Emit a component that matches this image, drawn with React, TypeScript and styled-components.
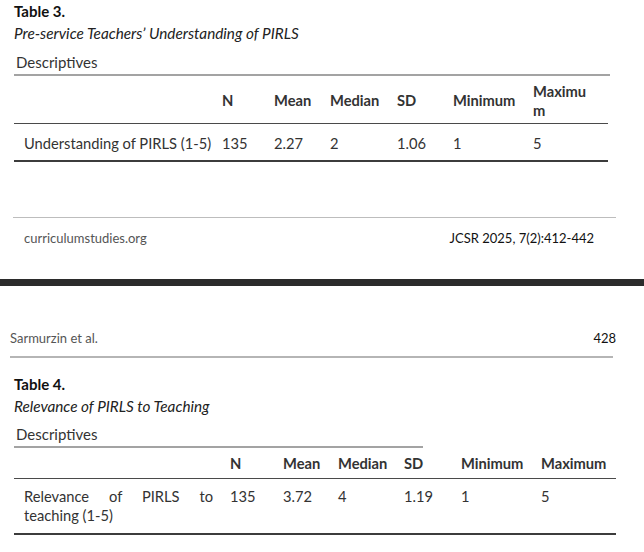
import React from "react";
import styled, { createGlobalStyle } from "styled-components";

const GlobalStyle = createGlobalStyle`
  html, body {
    margin: 0;
    padding: 0;
    background: #ffffff;
  }
  body {
    font-family: Lato, "Open Sans", sans-serif;
    color: #222;
    width: 644px;
    height: 552px;
    overflow: hidden;
  }
`;

const Page = styled.section`
  display: flex;
  flex-direction: column;
  background: #ffffff;
`;

const TableBlock = styled.div`
  display: flex;
  flex-direction: column;
  padding-left: 14px;
`;

const TableNumber = styled.div`
  font-weight: bold;
  font-size: 15px;
  line-height: 20px;
  color: #111;
`;

const TableCaption = styled.div`
  font-style: italic;
  font-size: 15.3px;
  line-height: 20px;
  margin-top: 2px;
  color: #222;
`;

const SectionLabel = styled.div<{ $width: number; $gapTop: number }>`
  width: ${(p) => p.$width}px;
  margin-top: ${(p) => p.$gapTop}px;
  padding: 0 0 2px 2px;
  box-sizing: border-box;
  font-size: 15px;
  line-height: 20px;
  color: #333;
  border-bottom: 2px solid #a3a3a3;
`;

const DataTable = styled.table<{ $width: number }>`
  width: ${(p) => p.$width}px;
  border-collapse: collapse;
  table-layout: fixed;
  font-size: 14.7px;
  color: #333;
`;

const HeadRow = styled.tr<{ $height: number }>`
  height: ${(p) => p.$height}px;
  border-bottom: 1px solid #4a4a4a;
`;

const BodyRow = styled.tr<{ $height: number }>`
  height: ${(p) => p.$height}px;
  border-bottom: 2px solid #3c3c3c;
`;

const HeadCell = styled.th<{ $width: number; $top: number }>`
  width: ${(p) => p.$width}px;
  box-sizing: border-box;
  padding: ${(p) => p.$top}px 0 0 6px;
  text-align: left;
  font-weight: bold;
  line-height: 19px;
  color: #333;
`;

const Cell = styled.td<{ $pad: number }>`
  box-sizing: border-box;
  padding: ${(p) => p.$pad}px 0 0 6px;
  text-align: left;
  vertical-align: top;
  line-height: 19px;
`;

const LabelCell = styled.td<{ $pad: number; $single?: boolean }>`
  box-sizing: border-box;
  padding: ${(p) => p.$pad}px 11px 0 10px;
  text-align: justify;
  white-space: ${(p) => (p.$single ? "nowrap" : "normal")};
  overflow: visible;
  vertical-align: top;
  line-height: 19px;
`;

const Footer = styled.div`
  display: flex;
  flex-direction: column;
  margin: 0 28px 0 13px;
  border-top: 1px solid #bdbdbd;
`;

const FooterRow = styled.div`
  display: flex;
  justify-content: space-between;
  align-items: center;
  padding: 11px 22px 0 11px;
  font-size: 13px;
  line-height: 18px;
`;

const SiteName = styled.span`
  color: #555;
`;

const Citation = styled.span`
  color: #111;
`;

const PageGap = styled.div`
  height: 7px;
  background: #2b2b2b;
`;

const RunningHead = styled.div`
  display: flex;
  justify-content: space-between;
  align-items: center;
  margin: 0 31px 0 10px;
  padding: 0 0 9px 0;
  font-size: 13px;
  line-height: 18px;
  border-bottom: 2px solid #b5b5b5;
`;

const Authors = styled.span`
  color: #555;
`;

const PageNumber = styled.span`
  color: #111;
  margin-right: -3px;
`;

type Column = { key: string; label: React.ReactNode; width: number };

const cols3: Column[] = [
  { key: "label", label: "", width: 202 },
  { key: "n", label: "N", width: 52 },
  { key: "mean", label: "Mean", width: 56 },
  { key: "median", label: "Median", width: 67 },
  { key: "sd", label: "SD", width: 56 },
  { key: "min", label: "Minimum", width: 80 },
  {
    key: "max",
    label: (
      <>
        Maximu
        <br />m
      </>
    ),
    width: 81,
  },
];

const cols4: Column[] = [
  { key: "label", label: "", width: 210 },
  { key: "n", label: "N", width: 53 },
  { key: "mean", label: "Mean", width: 55 },
  { key: "median", label: "Median", width: 66 },
  { key: "sd", label: "SD", width: 57 },
  { key: "min", label: "Minimum", width: 80 },
  { key: "max", label: "Maximum", width: 81 },
];

const values3 = ["135", "2.27", "2", "1.06", "1", "5"];
const values4 = ["135", "3.72", "4", "1.19", "1", "5"];

const App: React.FC = () => {
  return (
    <>
      <GlobalStyle />
      <Page>
        <TableBlock style={{ paddingTop: 1 }}>
          <TableNumber>Table 3.</TableNumber>
          <TableCaption>Pre-service Teachers’ Understanding of PIRLS</TableCaption>
          <SectionLabel $width={596} $gapTop={9}>
            Descriptives
          </SectionLabel>
          <DataTable $width={594}>
            <thead>
              <HeadRow $height={47}>
                {cols3.map((c) => (
                  <HeadCell key={c.key} $width={c.width} $top={3}>
                    {c.label}
                  </HeadCell>
                ))}
              </HeadRow>
            </thead>
            <tbody>
              <BodyRow $height={38}>
                <LabelCell $pad={10} $single>
                  Understanding of PIRLS (1-5)
                </LabelCell>
                {values3.map((v, i) => (
                  <Cell key={i} $pad={10}>
                    {v}
                  </Cell>
                ))}
              </BodyRow>
            </tbody>
          </DataTable>
        </TableBlock>
        <Footer style={{ marginTop: 55 }}>
          <FooterRow>
            <SiteName>curriculumstudies.org</SiteName>
            <Citation>JCSR 2025, 7(2):412-442</Citation>
          </FooterRow>
        </Footer>
      </Page>
      <PageGap style={{ marginTop: 32 }} />
      <Page>
        <RunningHead style={{ marginTop: 43 }}>
          <Authors>Sarmurzin et al.</Authors>
          <PageNumber>428</PageNumber>
        </RunningHead>
        <TableBlock style={{ paddingTop: 16 }}>
          <TableNumber>Table 4.</TableNumber>
          <TableCaption>Relevance of PIRLS to Teaching</TableCaption>
          <SectionLabel $width={409} $gapTop={8}>
            Descriptives
          </SectionLabel>
          <DataTable $width={602}>
            <thead>
              <HeadRow $height={30}>
                {cols4.map((c) => (
                  <HeadCell key={c.key} $width={c.width} $top={1}>
                    {c.label}
                  </HeadCell>
                ))}
              </HeadRow>
            </thead>
            <tbody>
              <BodyRow $height={56}>
                <LabelCell $pad={8}>Relevance of PIRLS to teaching (1-5)</LabelCell>
                {values4.map((v, i) => (
                  <Cell key={i} $pad={8}>
                    {v}
                  </Cell>
                ))}
              </BodyRow>
            </tbody>
          </DataTable>
        </TableBlock>
      </Page>
    </>
  );
};

export default App;
